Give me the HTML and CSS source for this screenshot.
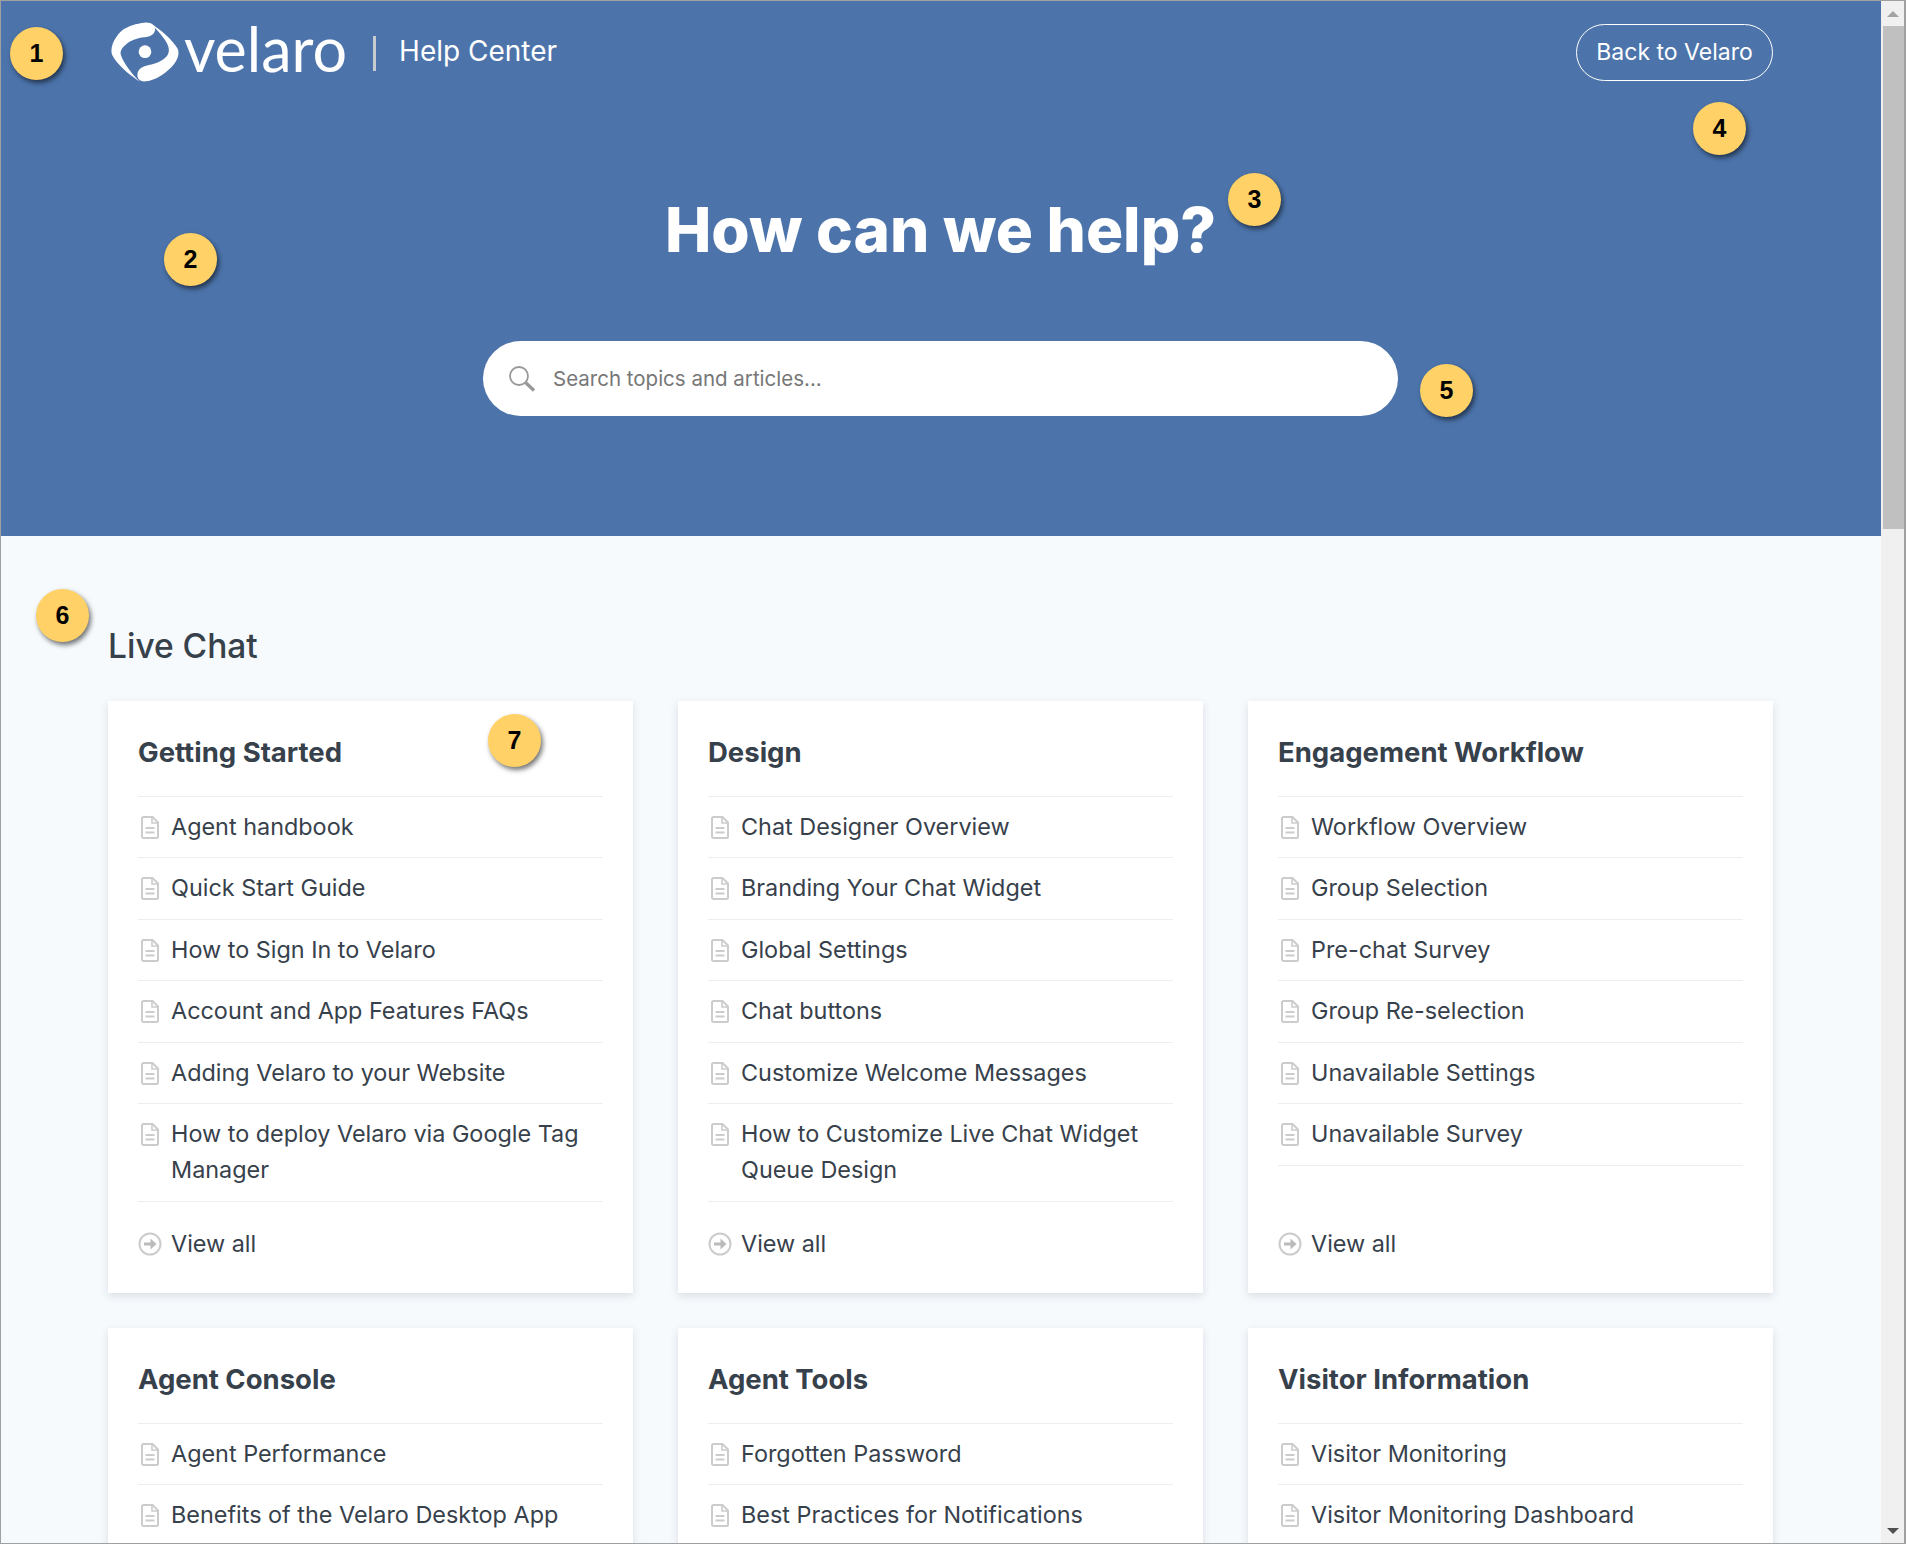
FILE: index.html
```html
<!DOCTYPE html>
<html lang="en">
<head>
    <meta charset="UTF-8">
    <meta name="viewport" content="width=device-width, initial-scale=1.0">
    <title>Velaro Help Center</title>
    <link rel="stylesheet" href="styles.css">
</head>
<body>
    <div class="window">
        <div class="page">
            <header class="hero">
                <div class="topbar">
                    <div class="brand">
                        <svg class="brand-mark" viewBox="0 0 240 210" aria-hidden="true">
                            <path fill="#fff" d="M118 14C138 12 152 22 150 37C148 50 136 56 118 58C98 60 78 66 62 80C50 90 44 100 48 112C54 132 78 166 104 191C72 170 36 140 22 112C14 94 24 62 50 38C68 24 96 16 118 14Z"/>
                            <path fill="#fff" d="M122 190C104 192 94 180 98 164C102 150 116 144 132 141C152 137 172 130 186 114C196 100 192 84 180 66C170 50 152 30 134 14C164 32 204 66 218 92C226 110 214 136 190 156C170 174 146 188 122 190Z"/>
                            <circle fill="#fff" cx="120" cy="101" r="19"/>
                        </svg>
                        <span class="brand-name">velaro</span>
                        <span class="brand-sep"></span>
                        <span class="brand-sub">Help Center</span>
                    </div>
                    <a class="back-link" href="#">Back to Velaro</a>
                </div>
                <h1>How can we help?</h1>
                <div class="search">
                    <svg class="search-icon" viewBox="0 0 28 28" aria-hidden="true">
                        <circle cx="11" cy="11" r="9" fill="none" stroke="#999" stroke-width="1.8"/>
                        <path d="M17.5 17.5L26 25.5" stroke="#999" stroke-width="3.4"/>
                    </svg>
                    <span class="search-text">Search topics and articles...</span>
                </div>
            </header>

            <main class="content">
                <h2>Live Chat</h2>
                <div class="cards">
                    <section class="card">
                        <h3>Getting Started</h3>
                        <ul>
                            <li><svg class="doc"><use href="#doc"/></svg>Agent handbook</li>
                            <li><svg class="doc"><use href="#doc"/></svg>Quick Start Guide</li>
                            <li><svg class="doc"><use href="#doc"/></svg>How to Sign In to Velaro</li>
                            <li><svg class="doc"><use href="#doc"/></svg>Account and App Features FAQs</li>
                            <li><svg class="doc"><use href="#doc"/></svg>Adding Velaro to your Website</li>
                            <li><svg class="doc"><use href="#doc"/></svg>How to deploy Velaro via Google Tag Manager</li>
                        </ul>
                        <a class="view-all" href="#"><svg class="arrow"><use href="#arrow"/></svg>View all</a>
                    </section>
                    <section class="card">
                        <h3>Design</h3>
                        <ul>
                            <li><svg class="doc"><use href="#doc"/></svg>Chat Designer Overview</li>
                            <li><svg class="doc"><use href="#doc"/></svg>Branding Your Chat Widget</li>
                            <li><svg class="doc"><use href="#doc"/></svg>Global Settings</li>
                            <li><svg class="doc"><use href="#doc"/></svg>Chat buttons</li>
                            <li><svg class="doc"><use href="#doc"/></svg>Customize Welcome Messages</li>
                            <li><svg class="doc"><use href="#doc"/></svg>How to Customize Live Chat Widget Queue Design</li>
                        </ul>
                        <a class="view-all" href="#"><svg class="arrow"><use href="#arrow"/></svg>View all</a>
                    </section>
                    <section class="card">
                        <h3>Engagement Workflow</h3>
                        <ul>
                            <li><svg class="doc"><use href="#doc"/></svg>Workflow Overview</li>
                            <li><svg class="doc"><use href="#doc"/></svg>Group Selection</li>
                            <li><svg class="doc"><use href="#doc"/></svg>Pre-chat Survey</li>
                            <li><svg class="doc"><use href="#doc"/></svg>Group Re-selection</li>
                            <li><svg class="doc"><use href="#doc"/></svg>Unavailable Settings</li>
                            <li><svg class="doc"><use href="#doc"/></svg>Unavailable Survey</li>
                        </ul>
                        <a class="view-all" href="#"><svg class="arrow"><use href="#arrow"/></svg>View all</a>
                    </section>
                    <section class="card">
                        <h3>Agent Console</h3>
                        <ul>
                            <li><svg class="doc"><use href="#doc"/></svg>Agent Performance</li>
                            <li><svg class="doc"><use href="#doc"/></svg>Benefits of the Velaro Desktop App</li>
                        </ul>
                    </section>
                    <section class="card">
                        <h3>Agent Tools</h3>
                        <ul>
                            <li><svg class="doc"><use href="#doc"/></svg>Forgotten Password</li>
                            <li><svg class="doc"><use href="#doc"/></svg>Best Practices for Notifications</li>
                        </ul>
                    </section>
                    <section class="card">
                        <h3>Visitor Information</h3>
                        <ul>
                            <li><svg class="doc"><use href="#doc"/></svg>Visitor Monitoring</li>
                            <li><svg class="doc"><use href="#doc"/></svg>Visitor Monitoring Dashboard</li>
                        </ul>
                    </section>
                </div>
            </main>
        </div>

        <div class="scrollbar">
            <div class="scroll-btn"><span class="tri-up"></span></div>
            <div class="scroll-thumb"></div>
            <div class="scroll-track"></div>
            <div class="scroll-btn"><span class="tri-down"></span></div>
        </div>

        <!-- numbered callouts -->
        <span class="badge b1">1</span>
        <span class="badge b2">2</span>
        <span class="badge b3">3</span>
        <span class="badge b4">4</span>
        <span class="badge b5">5</span>
        <span class="badge b6">6</span>
        <span class="badge b7">7</span>
    </div>

    <svg class="defs" aria-hidden="true">
        <symbol id="doc" viewBox="0 0 18 23">
            <path d="M1 2.5C1 1.6 1.6 1 2.5 1H11.5L17 6.5V20.5C17 21.4 16.4 22 15.5 22H2.5C1.6 22 1 21.4 1 20.5Z" fill="none" stroke="#ccc" stroke-width="2"/>
            <path d="M11 1V7H17" fill="none" stroke="#ccc" stroke-width="1.6"/>
            <path d="M4.5 12H13.5M4.5 16.5H13.5" stroke="#ccc" stroke-width="2"/>
        </symbol>
        <symbol id="arrow" viewBox="0 0 24 24">
            <circle cx="12" cy="12" r="10.5" fill="none" stroke="#ccc" stroke-width="2"/>
            <path d="M6 12H15" stroke="#bbb" stroke-width="3"/>
            <path d="M12.5 6.5L18.5 12L12.5 17.5Z" fill="#bbb"/>
        </symbol>
    </svg>
</body>
</html>
```

FILE: styles.css
```css
* {
    box-sizing: border-box;
}

html, body {
    margin: 0;
    padding: 0;
    height: 100%;
    overflow: hidden;
}

body {
    font-family: Inter, "Noto Sans", sans-serif;
    color: #37414b;
    background: #f6fafd;
}

.defs {
    display: none;
}

.window {
    position: relative;
    display: flex;
    width: 1906px;
    height: 1544px;
    border: 1px solid #a0a0a0;
    border-width: 1px 2px 1px 1px;
    overflow: hidden;
}

.page {
    flex: 1;
    min-width: 0;
    overflow: hidden;
}

.hero {
    background: #4c74ab;
    height: 535px;
    padding: 0 108px 0 107px;
}

.topbar {
    display: flex;
    justify-content: space-between;
    align-items: flex-start;
    padding-top: 21px;
}

.brand {
    display: flex;
    align-items: center;
    color: #fff;
    height: 62px;
}

.brand-mark {
    width: 80px;
    height: 70px;
    margin-left: -3px;
    flex: none;
}

.brand-name {
    font-family: Lato, sans-serif;
    font-size: 61px;
    line-height: 62px;
    margin-left: -1px;
    padding-bottom: 8px;
}

.brand-sep {
    width: 3px;
    height: 35px;
    margin-left: 26px;
    background: #c8ccd0;
}

.brand-sub {
    font-size: 28px;
    line-height: 33px;
    padding: 0 0 3px 23px;
}

.back-link {
    display: block;
    margin-top: 2px;
    color: #fff;
    text-decoration: none;
    border: 1px solid #fff;
    border-radius: 29px;
    width: 197px;
    height: 57px;
    line-height: 54px;
    text-align: center;
    font-size: 23px;
}

h1 {
    margin: 107px 0 0;
    color: #fff;
    text-align: center;
    font-size: 62px;
    line-height: 78px;
    font-weight: 800;
}

.search {
    display: flex;
    align-items: center;
    width: 915px;
    height: 75px;
    margin: 72px auto 0;
    padding-left: 25px;
    background: #fff;
    border-radius: 38px;
}

.search-icon {
    width: 28px;
    height: 28px;
    margin-right: 17px;
}

.search-text {
    color: #777;
    font-size: 20.5px;
}

.content {
    padding: 0 107px;
}

h2 {
    margin: 88px 0 0;
    font-size: 33.5px;
    line-height: 44px;
    font-weight: 500;
}

.cards {
    display: grid;
    grid-template-columns: repeat(3, 525px);
    gap: 35.5px 45px;
    margin-top: 33px;
}

.card {
    display: flex;
    flex-direction: column;
    background: #fff;
    padding: 30.5px 30px 0;
    box-shadow: 0 3px 8px rgba(60, 70, 80, 0.15);
    min-height: 591.5px;
}

h3 {
    margin: 0;
    font-size: 27.5px;
    line-height: 40px;
    font-weight: 700;
    padding-bottom: 24px;
    border-bottom: 1px solid #eceeef;
}

ul {
    list-style: none;
    margin: 0;
    padding: 0;
}

li {
    position: relative;
    padding: 12px 0 12.5px 33px;
    font-size: 23.4px;
    line-height: 36px;
    border-bottom: 1px solid #eceeef;
}

.doc {
    position: absolute;
    left: 3px;
    top: 19px;
    width: 18px;
    height: 23px;
}

.view-all {
    position: relative;
    display: block;
    margin-top: auto;
    padding-left: 33px;
    height: 67px;
    font-size: 23.4px;
    line-height: 36px;
    color: inherit;
    text-decoration: none;
}

.arrow {
    position: absolute;
    left: 0;
    top: 6px;
    width: 24px;
    height: 24px;
}

.scrollbar {
    display: flex;
    flex-direction: column;
    width: 23px;
    background: #f0f0f0;
}

.scroll-btn {
    display: flex;
    align-items: center;
    justify-content: center;
    height: 25px;
    flex: none;
}

.tri-up {
    border: 6px solid transparent;
    border-top: 0;
    border-bottom: 6px solid #a3a3a3;
}

.tri-down {
    border: 6px solid transparent;
    border-bottom: 0;
    border-top: 6px solid #505050;
}

.scroll-thumb {
    height: 503px;
    margin-left: 2px;
    background: #c0c0c0;
}

.scroll-track {
    flex: 1;
}

.badge {
    position: absolute;
    width: 53px;
    height: 53px;
    margin: -27px 0 0 -28px;
    border-radius: 50%;
    background: #ffd166;
    box-shadow: 2px 3px 5px rgba(0, 0, 0, 0.55);
    font-family: "Liberation Sans", Arial, sans-serif;
    font-weight: 700;
    font-size: 25px;
    line-height: 53px;
    text-align: center;
    color: #000;
}

.b1 { left: 37px; top: 53px; }
.b2 { left: 191px; top: 259px; }
.b3 { left: 1255px; top: 199px; }
.b4 { left: 1720px; top: 128px; }
.b5 { left: 1447px; top: 390px; }
.b6 { left: 63px; top: 615px; }
.b7 { left: 515px; top: 740px; }
```
